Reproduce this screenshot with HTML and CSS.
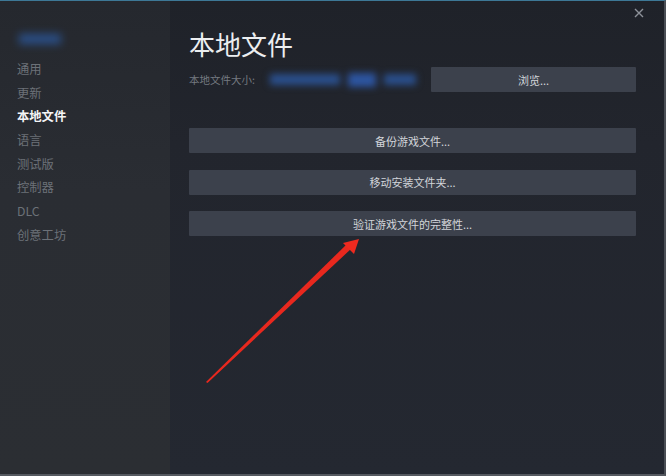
FILE: index.html
```html
<!DOCTYPE html>
<html lang="zh">
<head>
<meta charset="utf-8">
<link rel="stylesheet" href="styles.css">
</head>
<body>
<div class="window">
  <aside class="sidebar">
    <div class="game-name"></div>
    <ul class="menu">
      <li>通用</li>
      <li>更新</li>
      <li class="active">本地文件</li>
      <li>语言</li>
      <li>测试版</li>
      <li>控制器</li>
      <li>DLC</li>
      <li>创意工坊</li>
    </ul>
  </aside>
  <main class="main">
    <div class="close">
      <svg width="10" height="10" viewBox="0 0 10 10"><path d="M1 1L9 9M9 1L1 9" stroke="#8d9199" stroke-width="1.4"/></svg>
    </div>
    <h1 class="title">本地文件</h1>
    <div class="size-row">
      <span class="size-label">本地文件大小:</span>
      <span class="size-value"><i class="b1"></i><i class="b2"></i><i class="b3"></i></span>
      <button class="btn browse">浏览...</button>
    </div>
    <div class="actions">
      <button class="btn">备份游戏文件...</button>
      <button class="btn">移动安装文件夹...</button>
      <button class="btn">验证游戏文件的完整性...</button>
    </div>
  </main>
  <svg class="arrow" width="666" height="476" viewBox="0 0 666 476">
    <polygon points="206,382 207.5,383 352,248 348,243" fill="#e8281e"/>
    <polygon points="359,239 343,243 354,254" fill="#ee2a1f"/>
  </svg>
</div>
</body>
</html>
```
FILE: styles.css
```css
* { box-sizing: border-box; }
html, body { margin: 0; padding: 0; }
body {
  width: 666px;
  height: 476px;
  overflow: hidden;
  background: #23262e;
  font-family: "Noto Sans CJK SC", "Noto Sans", sans-serif;
}
.window {
  position: relative;
  display: flex;
  width: 666px;
  height: 476px;
  border-top: 1px solid #3d7896;
  border-right: 2px solid #4a4e55;
  border-bottom: 2px solid #555960;
}
.sidebar {
  width: 170px;
  flex: none;
  background: linear-gradient(180deg, #25282e 0%, #2a2d33 40%, #2b2e33 100%);
  padding: 33px 0 0 17px;
}
.game-name {
  width: 42px;
  height: 10px;
  margin-left: 2px;
  background: #2c5aa0;
  filter: blur(4px);
  opacity: 0.8;
}
.menu {
  list-style: none;
  margin: 14px 0 0;
  padding: 0;
}
.menu li {
  height: 23.7px;
  line-height: 23.7px;
  font-size: 12.3px;
  color: #6c7178;
}
.menu li.active {
  color: #f4f5f6;
  font-weight: bold;
}
.main {
  position: relative;
  flex: 1;
  padding: 0 28px 0 19px;
  background: linear-gradient(180deg, #1f2229 0%, #22252d 30%, #242831 100%);
}
.close {
  position: absolute;
  top: 7px;
  right: 20px;
  width: 10px;
  height: 10px;
  display: flex;
}
.title {
  margin: 29px 0 0;
  font-size: 26px;
  line-height: 28px;
  font-weight: normal;
  color: #eceef0;
}
.size-row {
  display: flex;
  align-items: center;
  margin-top: 9px;
  height: 25px;
}
.size-label {
  font-size: 10.5px;
  color: #747980;
  width: 81px;
}
.size-value {
  display: flex;
  align-items: center;
  gap: 8px;
  width: 161px;
  filter: blur(3.5px);
}
.size-value i { display: block; height: 11px; background: #2a4f8c; }
.size-value .b1 { width: 70px; }
.size-value .b2 { width: 28px; height: 14px; background: #2d55a0; }
.size-value .b3 { width: 32px; }
.btn {
  display: block;
  height: 25px;
  border: none;
  margin: 0;
  padding: 0;
  background: #3c414c;
  color: #d2d5da;
  font-family: "Noto Sans CJK SC", "Noto Sans", sans-serif;
  font-size: 11px;
  border-radius: 1px;
}
.browse { width: 205px; }
.actions {
  display: flex;
  flex-direction: column;
  gap: 16.5px;
  margin-top: 36px;
}
.actions .btn { width: 447px; }
.arrow {
  position: absolute;
  left: 0;
  top: -1px;
  pointer-events: none;
}
```
